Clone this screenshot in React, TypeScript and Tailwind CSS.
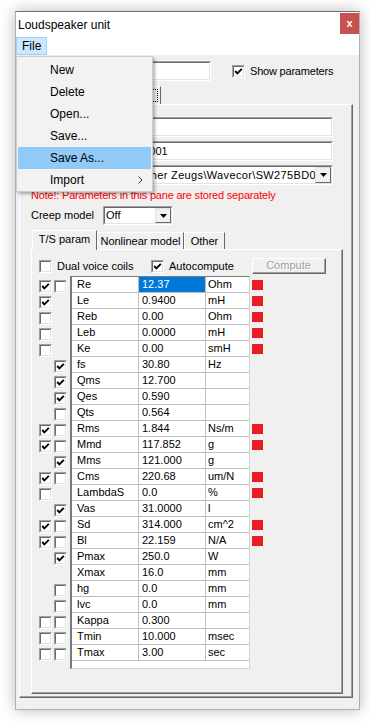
import React from 'react';

type Row = { n: string; v: string; u: string; a: number | null; b: number | null; red?: boolean };

const rows: Row[] = [
  { n: 'Re', v: '12.37', u: 'Ohm', a: 1, b: 0, red: true },
  { n: 'Le', v: '0.9400', u: 'mH', a: 1, b: null, red: true },
  { n: 'Reb', v: '0.00', u: 'Ohm', a: 0, b: null, red: true },
  { n: 'Leb', v: '0.0000', u: 'mH', a: 0, b: null, red: true },
  { n: 'Ke', v: '0.00', u: 'smH', a: 0, b: null, red: true },
  { n: 'fs', v: '30.80', u: 'Hz', a: null, b: 1 },
  { n: 'Qms', v: '12.700', u: '', a: null, b: 1 },
  { n: 'Qes', v: '0.590', u: '', a: null, b: 1 },
  { n: 'Qts', v: '0.564', u: '', a: null, b: 0 },
  { n: 'Rms', v: '1.844', u: 'Ns/m', a: 1, b: 0, red: true },
  { n: 'Mmd', v: '117.852', u: 'g', a: 1, b: 0, red: true },
  { n: 'Mms', v: '121.000', u: 'g', a: null, b: 1 },
  { n: 'Cms', v: '220.68', u: 'um/N', a: 1, b: 0, red: true },
  { n: 'LambdaS', v: '0.0', u: '%', a: 0, b: null, red: true },
  { n: 'Vas', v: '31.0000', u: 'l', a: null, b: 1 },
  { n: 'Sd', v: '314.000', u: 'cm^2', a: 1, b: 0, red: true },
  { n: 'Bl', v: '22.159', u: 'N/A', a: 1, b: 0, red: true },
  { n: 'Pmax', v: '250.0', u: 'W', a: null, b: 1 },
  { n: 'Xmax', v: '16.0', u: 'mm', a: null, b: null },
  { n: 'hg', v: '0.0', u: 'mm', a: null, b: 0 },
  { n: 'lvc', v: '0.0', u: 'mm', a: null, b: 0 },
  { n: 'Kappa', v: '0.300', u: '', a: 0, b: 0 },
  { n: 'Tmin', v: '10.000', u: 'msec', a: 0, b: 0 },
  { n: 'Tmax', v: '3.00', u: 'sec', a: 0, b: 0 },
];

const Check = ({ on, className = '' }: { on?: boolean; className?: string }) => (
  <span className={`block w-[13px] h-[13px] shrink-0 border border-t-[#a0a0a0] border-l-[#a0a0a0] border-r-white border-b-white ${className}`}>
    <span className="block w-full h-full border border-t-[#696969] border-l-[#696969] border-r-[#e3e3e3] border-b-[#e3e3e3] bg-white">
      {on && (
        <svg width="9" height="9" viewBox="0 0 9 9" className="block">
          <polyline points="1.2,4 3.4,6.3 7.8,1.8" fill="none" stroke="#000" strokeWidth="1.9" />
        </svg>
      )}
    </span>
  </span>
);

const Sunken = ({ className = '', children }: { className?: string; children?: React.ReactNode }) => (
  <div className={`shrink-0 border border-t-[#a0a0a0] border-l-[#a0a0a0] border-r-white border-b-white ${className}`}>
    <div className="w-full h-full border border-t-[#696969] border-l-[#696969] border-r-[#e3e3e3] border-b-[#e3e3e3] bg-white flex items-center overflow-hidden">
      {children}
    </div>
  </div>
);

const DropBtn = () => (
  <div className="w-[16px] h-full shrink-0 bg-[#f0f0f0] border border-t-[#e3e3e3] border-l-[#e3e3e3] border-r-[#696969] border-b-[#696969] flex items-center justify-center">
    <svg width="7" height="4" viewBox="0 0 7 4">
      <polygon points="0,0 7,0 3.5,4" fill="#000" />
    </svg>
  </div>
);

const Combo = ({ className = '', text, textClass = '' }: { className?: string; text: string; textClass?: string }) => (
  <Sunken className={className}>
    <span className="flex-1 min-w-0 whitespace-nowrap overflow-hidden pl-[1px]">
      <span className={`inline-block ${textClass}`}>{text}</span>
    </span>
    <DropBtn />
  </Sunken>
);

const menu = ['New', 'Delete', 'Open...', 'Save...', 'Save As...', 'Import'];

export default function App() {
  return (
    <div className="w-[370px] h-[725px] bg-white pt-[11px] pl-[15px] font-['Liberation_Sans',Arial,sans-serif] text-[11px] leading-[13px] text-black">
      <div className="w-[345px] h-[699px] flex flex-col border border-[#b0b0b0] border-t-[#6e6e6e] bg-[#f0f0f0] shadow-[0_0_14px_rgba(0,0,0,0.28)]">
        {/* title bar */}
        <div className="h-[25px] bg-white flex justify-between shrink-0">
          <span className="text-[12px] leading-[14px] pl-[2px] pt-[6px]">Loudspeaker unit</span>
          <div className="w-[19px] h-[21px] mt-[1px] bg-[#c75050] flex items-center justify-center text-white font-bold text-[11px] leading-[11px]">x</div>
        </div>
        {/* menu bar */}
        <div className="h-[18px] bg-white flex shrink-0">
          <div className="w-[31px] h-[18px] bg-[#cce8ff] border border-[#99d1ff] text-[12px] leading-[16px] pl-[5px]">File</div>
        </div>

        {/* client */}
        <div className="flex-1 relative">
          <div className="flex items-center mt-[6px] h-[20px]">
            <span className="ml-[16px] w-[60px]">Name</span>
            <Sunken className="w-[119px] h-[20px]" />
            <Check on className="ml-[21px]" />
            <span className="ml-[5px] tracking-[-0.2px]">Show parameters</span>
          </div>

          <div className="ml-[3px] mt-[5px] w-[334px]">
            <div className="h-[18px] flex">
              <div className="w-[142px] h-[18px] border-t border-l border-r border-t-white border-l-white border-r-[#696969] p-[2px]">
                <div className="h-full border border-dotted border-black flex items-center justify-center">Parameters</div>
              </div>
            </div>

            {/* outer panel */}
            <div className="h-[594px] border border-t-white border-l-white border-r-[#696969] border-b-[#696969]">
              <div className="h-full border-r border-b border-[#a0a0a0] pl-[11px] pt-[12px] flex flex-col">
                <div className="flex items-center h-[20px]">
                  <span className="w-[59px]">Maker</span>
                  <Sunken className="w-[243px] h-[20px]"><span className="pl-[1px]">Wavecor</span></Sunken>
                </div>
                <div className="flex items-center h-[20px] mt-[4px]">
                  <span className="w-[59px]">Model</span>
                  <Sunken className="w-[243px] h-[20px]"><span className="pl-[6px]">SW275BD001</span></Sunken>
                </div>
                <div className="flex items-center h-[20px] mt-[4px]">
                  <span className="w-[59px]">File</span>
                  <Combo className="w-[243px] h-[20px]" textClass="-ml-[3px] tracking-[0.35px]" text="C:\Technischer Zeugs\Wavecor\SW275BD01.txt" />
                </div>
                <div className="mt-[4px] text-[#ff0000] whitespace-nowrap tracking-[-0.2px]">Note!: Parameters in this pane are stored separately</div>
                <div className="flex items-center h-[19px] mt-[4px]">
                  <span className="w-[72px]">Creep model</span>
                  <Combo className="w-[70px] h-[19px]" text="Off" />
                </div>

                {/* inner tabs */}
                <div className="mt-[5px] h-[19px] flex items-end pl-[1px]">
                  <div className="relative z-10 -mb-px w-[65px] h-[20px] bg-[#f0f0f0] border-t border-l border-r border-t-white border-l-white border-r-[#696969] flex items-center justify-center pb-[2px]">T/S param</div>
                  <div className="w-[87px] h-[17px] border-t border-l border-r border-t-white border-l-white border-r-[#696969] flex items-center justify-center">Nonlinear model</div>
                  <div className="w-[41px] h-[17px] border-t border-l border-r border-t-white border-l-white border-r-[#696969] flex items-center justify-center">Other</div>
                </div>
                <div className="w-[312px] h-[445px] border border-t-white border-l-white border-r-[#696969] border-b-[#696969]">
                  <div className="h-full border-r border-b border-[#a0a0a0] pl-[7px] pt-[8px] flex flex-col">
                    <div className="flex items-center h-[16px]">
                      <Check />
                      <span className="ml-[5px] w-[94px]">Dual voice coils</span>
                      <Check on />
                      <span className="ml-[5px] w-[83px]">Autocompute</span>
                      <div className="w-[74px] h-[16px] border border-t-white border-l-white border-r-[#696969] border-b-[#696969]">
                        <div className="h-full border-r border-b border-[#a0a0a0] flex items-center justify-center text-[#a0a0a0] [text-shadow:1px_1px_0_#fff]">Compute</div>
                      </div>
                    </div>

                    <div className="flex mt-[2px]">
                      <div className="flex flex-col pt-[1px]">
                        {rows.map((r) => (
                          <div key={r.n} className="h-[16px] flex gap-[2px] pt-[3px]">
                            {r.a === null ? <span className="w-[13px]" /> : <Check on={r.a === 1} />}
                            {r.b === null ? <span className="w-[13px]" /> : <Check on={r.b === 1} />}
                          </div>
                        ))}
                      </div>
                      <div className="ml-[3px] w-[180px] h-[393px] bg-white border-l-2 border-t border-r border-b border-l-[#7a7a7a] border-t-[#7a7a7a] border-r-[#d4d4d4] border-b-[#d4d4d4]">
                        {rows.map((r, i) => (
                          <div key={r.n} className="h-[16px] flex border-b border-[#bdbdbd] leading-[15px]">
                            <div className="w-[67px] border-r border-[#bdbdbd] pl-[5px]">{r.n}</div>
                            <div className={`w-[67px] border-r border-[#bdbdbd] pl-[3px] ${i === 0 ? 'bg-[#0078d7] text-white' : ''}`}>{r.v}</div>
                            <div className="w-[43px] pl-[2px]">{r.u}</div>
                          </div>
                        ))}
                      </div>
                      <div className="ml-[2px] flex flex-col pt-[1px]">
                        {rows.map((r) => (
                          <div key={r.n} className="h-[16px] pt-[3px]">
                            {r.red && <div className="w-[11px] h-[10px] bg-[#ed1c24]" />}
                          </div>
                        ))}
                      </div>
                    </div>
                  </div>
                </div>
              </div>
            </div>
          </div>

          {/* File menu dropdown */}
          <div className="absolute left-0 top-[1px] w-[137px] h-[136px] bg-[#f2f2f2] border border-[#cccccc] shadow-[2px_2px_3px_rgba(0,0,0,0.3)] pt-[2px] px-[1px] text-[12px]">
            {menu.map((m) => (
              <div key={m} className={`h-[22px] flex items-center pl-[32px] pr-[8px] ${m === 'Save As...' ? 'bg-[#91c9f7]' : ''}`}>
                <span className="flex-1">{m}</span>
                {m === 'Import' && (
                  <svg width="5" height="8" viewBox="0 0 5 8">
                    <polyline points="0.5,0.5 4,4 0.5,7.5" fill="none" stroke="#333" strokeWidth="1" />
                  </svg>
                )}
              </div>
            ))}
          </div>
        </div>
      </div>
    </div>
  );
}
